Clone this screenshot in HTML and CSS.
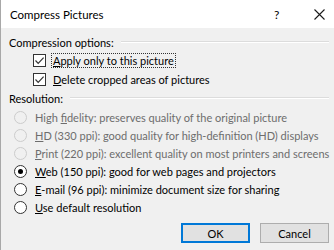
FILE: index.html
```html
<!DOCTYPE html>
<html lang="en">
    <head>
        <meta charset="utf-8"/>
        <title>Compress Pictures</title>
        <link rel="stylesheet" href="styles.css">
    </head>
    <body>
        <div class="dialog">
            <header class="titlebar">
                <div class="title">Compress Pictures</div>
                <div class="help">?</div>
                <div class="close">
                    <svg width="11" height="11" viewBox="0 0 11 11"><path d="M0.5 0.5 L10.5 10.5 M10.5 0.5 L0.5 10.5" stroke="#1a1a1a" stroke-width="1.1" fill="none"/></svg>
                </div>
            </header>
            <div class="dialog-body">
                <div class="group-head">
                    <span>Compression options:</span>
                    <div class="rule"></div>
                </div>
                <div class="checks">
                    <label class="check">
                        <span class="box"><svg width="11" height="11" viewBox="0 0 11 11"><path d="M1.5 5.5 L4.2 8.3 L9.6 2.6" stroke="#333" stroke-width="1.2" fill="none"/></svg></span>
                        <span class="focus"><u>A</u>pply only to this picture</span>
                    </label>
                    <label class="check">
                        <span class="box"><svg width="11" height="11" viewBox="0 0 11 11"><path d="M1.5 5.5 L4.2 8.3 L9.6 2.6" stroke="#333" stroke-width="1.2" fill="none"/></svg></span>
                        <span class="nofocus"><u>D</u>elete cropped areas of pictures</span>
                    </label>
                </div>
                <div class="group-head res-head">
                    <span>Resolution:</span>
                    <div class="rule"></div>
                </div>
                <div class="radios">
                    <label class="radio disabled"><span class="dot"></span><span>High <u>f</u>idelity: preserves quality of the original picture</span></label>
                    <label class="radio disabled"><span class="dot"></span><span><u>H</u>D (330 ppi): good quality for high-definition (HD) displays</span></label>
                    <label class="radio disabled"><span class="dot"></span><span><u>P</u>rint (220 ppi): excellent quality on most printers and screens</span></label>
                    <label class="radio checked"><span class="dot"></span><span><u>W</u>eb (150 ppi): good for web pages and projectors</span></label>
                    <label class="radio"><span class="dot"></span><span><u>E</u>-mail (96 ppi): minimize document size for sharing</span></label>
                    <label class="radio"><span class="dot"></span><span><u>U</u>se default resolution</span></label>
                </div>
                <div class="buttons">
                    <button class="btn default">OK</button>
                    <button class="btn">Cancel</button>
                </div>
            </div>
        </div>
    </body>
</html>
```

FILE: styles.css
```css
html, body {
    margin: 0;
    padding: 0;
    background: #f0f0f0;
}

.dialog {
    width: 333px;
    height: 250px;
    border-left: 1px solid #a8a8a8;
    display: flex;
    flex-direction: column;
    font-family: Lato, "Liberation Sans", sans-serif;
    font-size: 11px;
    color: #000;
    white-space: nowrap;
    overflow: hidden;
}

.titlebar {
    height: 28px;
    flex-shrink: 0;
    background: #fff;
    display: flex;
    align-items: center;
}

.titlebar .title {
    flex-grow: 1;
    padding-left: 9px;
    font-size: 11.5px;
}

.titlebar .help {
    width: 20px;
    font-size: 12px;
    margin-right: 20px;
}

.titlebar .close {
    width: 20px;
    display: flex;
    align-items: center;
}

.dialog-body {
    flex-grow: 1;
    background: #f0f0f0;
    display: flex;
    flex-direction: column;
    padding: 6px 5px 0 8px;
}

.group-head {
    display: flex;
    align-items: center;
    gap: 7px;
    height: 16px;
}

.group-head .rule {
    flex-grow: 1;
    height: 1px;
    background: #dcdcdc;
    border-bottom: 1px solid #fff;
}

.res-head {
    margin-top: 2px;
}

.checks {
    display: flex;
    flex-direction: column;
    padding-left: 24px;
    gap: 2px;
    margin-top: 2px;
}

.check {
    display: flex;
    align-items: center;
    gap: 6px;
    height: 17px;
}

.check .box {
    width: 11px;
    height: 11px;
    border: 1px solid #333;
    background: #fff;
    display: flex;
}

.check .focus {
    outline: 1px dotted #333;
    padding: 0 1px;
}

.check .nofocus {
    padding: 0 1px;
}

.radios {
    display: flex;
    flex-direction: column;
    padding-left: 5px;
    margin-top: 2px;
}

.radio {
    display: flex;
    align-items: center;
    gap: 8px;
    height: 18px;
}

.radio .dot {
    width: 11px;
    height: 11px;
    flex-shrink: 0;
    border: 1px solid #333;
    border-radius: 50%;
    background: #fff;
    position: relative;
}

.radio.disabled {
    color: #6d6d6d;
}

.radio.disabled .dot {
    border-color: #cccccc;
    background: #f0f0f0;
}

.radio.checked .dot::after {
    content: "";
    position: absolute;
    left: 3px;
    top: 3px;
    width: 5px;
    height: 5px;
    border-radius: 50%;
    background: #000;
}

.buttons {
    display: flex;
    justify-content: flex-end;
    gap: 10px;
    margin-top: 7px;
}

.btn {
    width: 69px;
    height: 20px;
    font-family: inherit;
    font-size: 11px;
    background: #e1e1e1;
    border: 1px solid #adadad;
    padding: 0;
    color: #000;
}

.btn.default {
    border: 2px solid #0078d7;
}
```
